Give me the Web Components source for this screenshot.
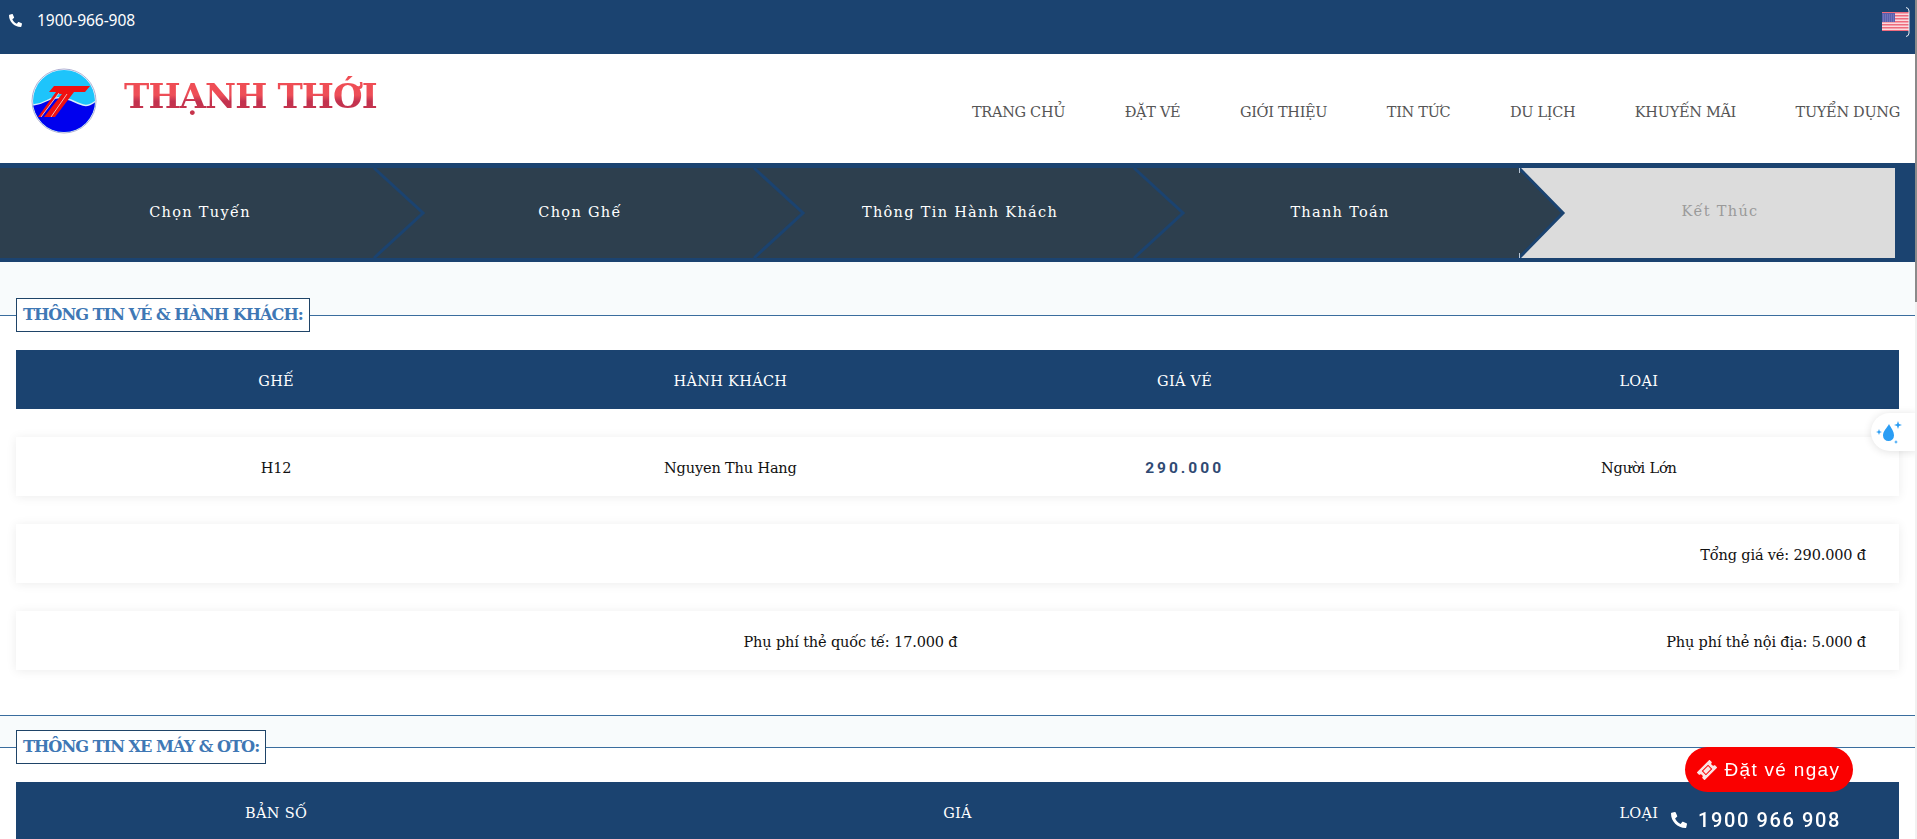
<!DOCTYPE html>
<html>
<head>
<meta charset="utf-8" />
<title>Thạnh Thới</title>
<style>
    html, body { margin: 0; padding: 0; height: 839px; overflow: hidden; background: #fff; }
    body { font-family: "DejaVu Serif", "Liberation Serif", serif; color: #111; width: 1915px; }
</style>
</head>
<body>
<top-bar phone="1900-966-908"></top-bar>
<site-header>
    <nav-link>TRANG CHỦ</nav-link>
    <nav-link>ĐẶT VÉ</nav-link>
    <nav-link>GIỚI THIỆU</nav-link>
    <nav-link>TIN TỨC</nav-link>
    <nav-link>DU LỊCH</nav-link>
    <nav-link>KHUYẾN MÃI</nav-link>
    <nav-link>TUYỂN DỤNG</nav-link>
</site-header>
<step-bar>
    <step-item>Chọn Tuyến</step-item>
    <step-item>Chọn Ghế</step-item>
    <step-item>Thông Tin Hành Khách</step-item>
    <step-item current>Thanh Toán</step-item>
    <step-item last>Kết Thúc</step-item>
</step-bar>

<ticket-section heading="THÔNG TIN VÉ &amp; HÀNH KHÁCH:" first>
    <table-row head>
        <span>GHẾ</span><span>HÀNH KHÁCH</span><span>GIÁ VÉ</span><span>LOẠI</span>
    </table-row>
    <table-row>
        <span>H12</span><span>Nguyen Thu Hang</span><price-tag>290.000</price-tag><span>Người Lớn</span>
    </table-row>
    <table-row cols="1fr" align="right">
        <span>Tổng giá vé: 290.000 đ</span>
    </table-row>
    <table-row cols="1fr 1fr" align="right">
        <span>Phụ phí thẻ quốc tế: 17.000 đ</span><span>Phụ phí thẻ nội địa: 5.000 đ</span>
    </table-row>
</ticket-section>

<ticket-section heading="THÔNG TIN XE MÁY &amp; OTO:">
    <table-row head cols="1fr 2fr 1fr">
        <span>BẢN SỐ</span><span>GIÁ</span><span>LOẠI</span>
    </table-row>
</ticket-section>

<book-now></book-now>
<water-widget></water-widget>
<page-scrollbar></page-scrollbar>

<script>
function shadow(el, html) {
    el.attachShadow({mode: 'open'}).innerHTML = html;
}

const phoneIcon = size => `<svg width="${size}" height="${size}" viewBox="0 0 512 512"><path fill="currentColor" d="M497 361l-112-48c-10-4-21-1-28 7l-49 61C229 344 168 283 131 204l61-49c8-7 11-18 7-28L151 15C146 4 134-2 122 1L18 25C7 27 0 37 0 48c0 257 208 464 464 464 11 0 21-8 23-19l24-104c3-12-3-24-14-28z"/></svg>`;

customElements.define('top-bar', class extends HTMLElement {
    connectedCallback () {
        shadow(this, `
        <style>
            :host { display: flex; height: 54px; background: #1b4370; color: #fff; align-items: flex-start; justify-content: space-between; font-family: "Noto Sans", sans-serif; font-size: 15.6px; }
            .phone { display: flex; align-items: center; gap: 15px; padding: 12px 0 0 9px; line-height: 17px; letter-spacing: -.1px; }
            .phone svg { display: block; margin-top: -1px; }
            .lang { position: relative; padding: 12px 6px 0 0; }
            .lang svg { display: block; }
            .curve { position: absolute; right: 5px; top: 7px; width: 4px; height: 30px; }
        </style>
        <div class="phone">${phoneIcon(13)}<span>${this.getAttribute('phone')}</span></div>
        <div class="lang">
            <svg width="27" height="19" viewBox="0 0 27 19">
                <rect width="27" height="19" fill="#fbd9dd"/>
                <g fill="#ee6b7d">
                    <rect y="0" width="27" height="1.5"/><rect y="3" width="27" height="1.5"/><rect y="6" width="27" height="1.5"/>
                    <rect y="9" width="27" height="1.5"/><rect y="12" width="27" height="1.5"/><rect y="15" width="27" height="1.5"/><rect y="18" width="27" height="1"/>
                </g>
                <rect x="0" y="1" width="13" height="9" fill="#5b5fae"/>
                <path d="M1 3h11M1 5h11M1 7h11M1 9h11" stroke="#a9abd8" stroke-width=".6" stroke-dasharray="1 1"/>
            </svg>
            <svg class="curve" viewBox="0 0 4 30"><path d="M0 .5Q3 1 3 4V26Q3 29 0 29.5" fill="none" stroke="#e8eef5" stroke-width="1"/></svg>
        </div>`);
    }
});

customElements.define('site-logo', class extends HTMLElement {
    connectedCallback () {
        shadow(this, `
        <style>
            :host { display: flex; align-items: flex-start; }
            svg { display: block; margin: 14px 0 0 31px; }
            .name { margin: 20px 0 0 27px; font: bold 34px/44px "DejaVu Serif", serif; letter-spacing: -.9px; white-space: nowrap;
                background: linear-gradient(180deg, #f04c52 0%, #ee4f58 48%, #c2324f 62%, #c8344a 100%);
                -webkit-background-clip: text; background-clip: text; color: transparent; }
        </style>
        <svg width="66" height="66" viewBox="0 0 66 66">
            <defs><clipPath id="c"><circle cx="33" cy="33" r="31"/></clipPath></defs>
            <circle cx="33" cy="33" r="32" fill="#fff" stroke="#aeb0d4" stroke-width="1"/>
            <g clip-path="url(#c)">
                <rect width="66" height="66" fill="#1ec4fb"/>
                <path d="M0 37Q8 37 15 33T30 30T42 33T52 37T66 32V66H0Z" fill="#0000ee"/>
                <path d="M0 37Q8 37 15 33T30 30T42 33T52 37T66 32" fill="none" stroke="#d9eefa" stroke-width="1.4"/>
            </g>
            <path d="M23 18H59L54 24H43L24 49H13L31 26H27L10 49H7L25 24H18Z" fill="#f01010"/>
            <path d="M10 49L28 25M20 49L36 26" stroke="#f2b7b7" stroke-width="1"/>
        </svg>
        <div class="name">THẠNH THỚI</div>`);
    }
});

customElements.define('nav-link', class extends HTMLElement {
    connectedCallback () {
        shadow(this, `
        <style>
            :host { display: block; color: #555; font-size: 14.5px; letter-spacing: -.3px; white-space: nowrap; line-height: 20px; }
        </style>
        <slot></slot>`);
    }
});

customElements.define('site-header', class extends HTMLElement {
    connectedCallback () {
        shadow(this, `
        <style>
            :host { display: flex; height: 109px; background: #fff; justify-content: space-between; }
            nav { display: flex; gap: 59.5px; padding: 48px 15px 0 0; }
        </style>
        <site-logo></site-logo>
        <nav><slot></slot></nav>`);
    }
});

customElements.define('step-bar', class extends HTMLElement {
    connectedCallback () {
        shadow(this, `
        <style>
            :host { display: grid; grid-template-columns: repeat(4, 380px) 375px; height: 90px; padding: 5px 0 4px; background: #1b4370; }
        </style>
        <slot></slot>`);
    }
});

customElements.define('step-item', class extends HTMLElement {
    connectedCallback () {
        const last = this.hasAttribute('last');
        const current = this.hasAttribute('current');
        let arrow = '';
        if (current) {
            arrow = `<svg class="arrow" width="50" height="90" viewBox="0 0 50 90" style="right:-49px">
                <path d="M0 0L44 45L0 90Z" fill="#2d3f4e"/>
                <path d="M0 0L44 45L0 90" fill="none" stroke="#1b4370" stroke-width="3"/>
                <path d="M.5 0V5M.5 85V90" stroke="#b9c7d6" stroke-width="1"/>
            </svg>`;
        } else if (!last) {
            arrow = `<svg class="arrow" width="50" height="90" viewBox="0 0 50 90" style="right:-44px">
                <path d="M0 0L49 45L0 90" fill="none" stroke="#1b4370" stroke-width="3"/>
            </svg>`;
        }
        shadow(this, `
        <style>
            :host { display: flex; position: relative; align-items: center; justify-content: center; box-sizing: border-box; padding-left: ${last ? 25 : 20}px;
                background: ${last ? '#dcdcdc' : '#2d3f4e'}; color: ${last ? '#9a9a9a' : '#fff'};
                font-size: 14.5px; letter-spacing: 1.3px; white-space: nowrap; }
            .arrow { position: absolute; top: 0; z-index: 1; display: block; overflow: visible; }
            span { position: relative; top: ${last ? -2 : -1}px; }
        </style>
        <span><slot></slot></span>${arrow}`);
    }
});

customElements.define('ticket-section', class extends HTMLElement {
    connectedCallback () {
        const first = this.hasAttribute('first');
        shadow(this, `
        <style>
            :host { display: block; }
            .head { box-sizing: border-box; height: ${first ? 54 : 33}px; background: #f8fbfc; border-bottom: 1px solid #3a6d9e; ${first ? '' : 'border-top: 1px solid #3a6d9e;'} display: flex; align-items: flex-end; padding-left: 16px; }
            h2 { margin: 0 0 -17px; box-sizing: border-box; height: 34px; padding: 0 6px; background: #fff; border: 1px solid #1f4468; color: #3f78b5; font: bold 16.2px/32px "DejaVu Serif", serif; letter-spacing: -1.02px; white-space: nowrap; position: relative; }
            .body { display: flex; flex-direction: column; gap: 28px; padding: 34px 16px 0; }
        </style>
        <div class="head"><h2>${this.getAttribute('heading').replace(/&/g, '&amp;')}</h2></div>
        <div class="body"><slot></slot></div>
        `);
        if (first) this.style.marginBottom = '45px';
    }
});

customElements.define('table-row', class extends HTMLElement {
    connectedCallback () {
        const head = this.hasAttribute('head');
        const cols = this.getAttribute('cols') || 'repeat(4, 1fr)';
        const align = this.getAttribute('align') || 'center';
        shadow(this, `
        <style>
            :host { display: grid; grid-template-columns: ${cols}; align-items: center; justify-items: ${align === 'right' ? 'end' : 'center'}; height: 59px; padding: 2px 33px 0 33px; box-sizing: border-box;
                background: ${head ? '#1b4370' : '#fff'}; color: ${head ? '#fff' : '#111'}; font-size: 14.5px; letter-spacing: ${head ? '.3px' : '-.15px'}; white-space: nowrap;
                ${head ? '' : 'box-shadow: 0 1px 10px rgba(0,0,0,.08);'} }
        </style>
        <slot></slot>`);
    }
});

customElements.define('price-tag', class extends HTMLElement {
    connectedCallback () {
        shadow(this, `
        <style>
            :host { display: block; color: #2f4a73; font: bold 15.5px "Roboto", sans-serif; letter-spacing: 3px; }
        </style>
        <slot></slot>`);
    }
});

customElements.define('book-now', class extends HTMLElement {
    connectedCallback () {
        shadow(this, `
        <style>
            :host { position: fixed; left: 1673px; top: 747px; width: 190px; display: flex; flex-direction: column; align-items: center; font-family: "Roboto", sans-serif; color: #fff; }
            .btn { display: flex; align-items: center; gap: 8px; box-sizing: border-box; width: 168px; height: 45px; margin-left: 1px; padding-left: 12px; border-radius: 23px; background: #fa0000; font: 19px "Liberation Sans", sans-serif; letter-spacing: 1.3px; }
            .tel { display: flex; align-items: center; gap: 11px; margin: 16px 0 0 -24px; font-size: 20px; font-weight: 500; letter-spacing: 1.6px; line-height: 24px; }
            svg { display: block; }
        </style>
        <div class="btn">
            <svg width="20" height="20" viewBox="0 0 20 20">
                <g transform="rotate(-45 10 10)">
                    <path d="M1 4.500H19V8A2 2 0 0 0 19 12V15.500H1V12A2 2 0 0 0 1 8Z" fill="#fbe4e4"/>
                    <rect x="6" y="7.500" width="8" height="5" fill="none" stroke="#fa0000" stroke-width="1"/>
                </g>
            </svg>
            <span>Đặt vé ngay</span>
        </div>
        <div class="tel">${phoneIcon(16)}<span>1900 966 908</span></div>`);
    }
});

customElements.define('water-widget', class extends HTMLElement {
    connectedCallback () {
        shadow(this, `
        <style>
            :host { position: fixed; right: 0; top: 413px; width: 46px; height: 38px; background: #fff; border-radius: 19px 0 0 19px; box-shadow: 0 1px 8px rgba(0,0,0,.12); display: block; }
            svg { display: block; }
        </style>
        <svg width="46" height="38" viewBox="0 0 46 38">
            <path d="M18 11C20 15 23 18 23 22.500A5.500 5.500 0 0 1 12 22.500C12 18 16 15 18 11Z" fill="#2a9df4"/>
            <path d="M27 8L28 11L31 12L28 13L27 16L26 13L23 12L26 11Z" fill="#2a9df4"/>
            <path d="M8 16L8.800 18.200L11 19L8.800 19.800L8 22L7.200 19.800L5 19L7.200 18.200Z" fill="#2a9df4"/>
            <path d="M25 27L25.600 28.400L27 29L25.600 29.600L25 31L24.400 29.600L23 29L24.400 28.400Z" fill="#2a9df4"/>
        </svg>`);
    }
});

customElements.define('page-scrollbar', class extends HTMLElement {
    connectedCallback () {
        shadow(this, `
        <style>
            :host { position: fixed; right: 0; top: 0; bottom: 0; width: 2px; background: #f1f1f1; display: block; }
            div { height: 302px; background: #8a8a8a; }
        </style>
        <div></div>`);
    }
});
</script>
</body>
</html>
